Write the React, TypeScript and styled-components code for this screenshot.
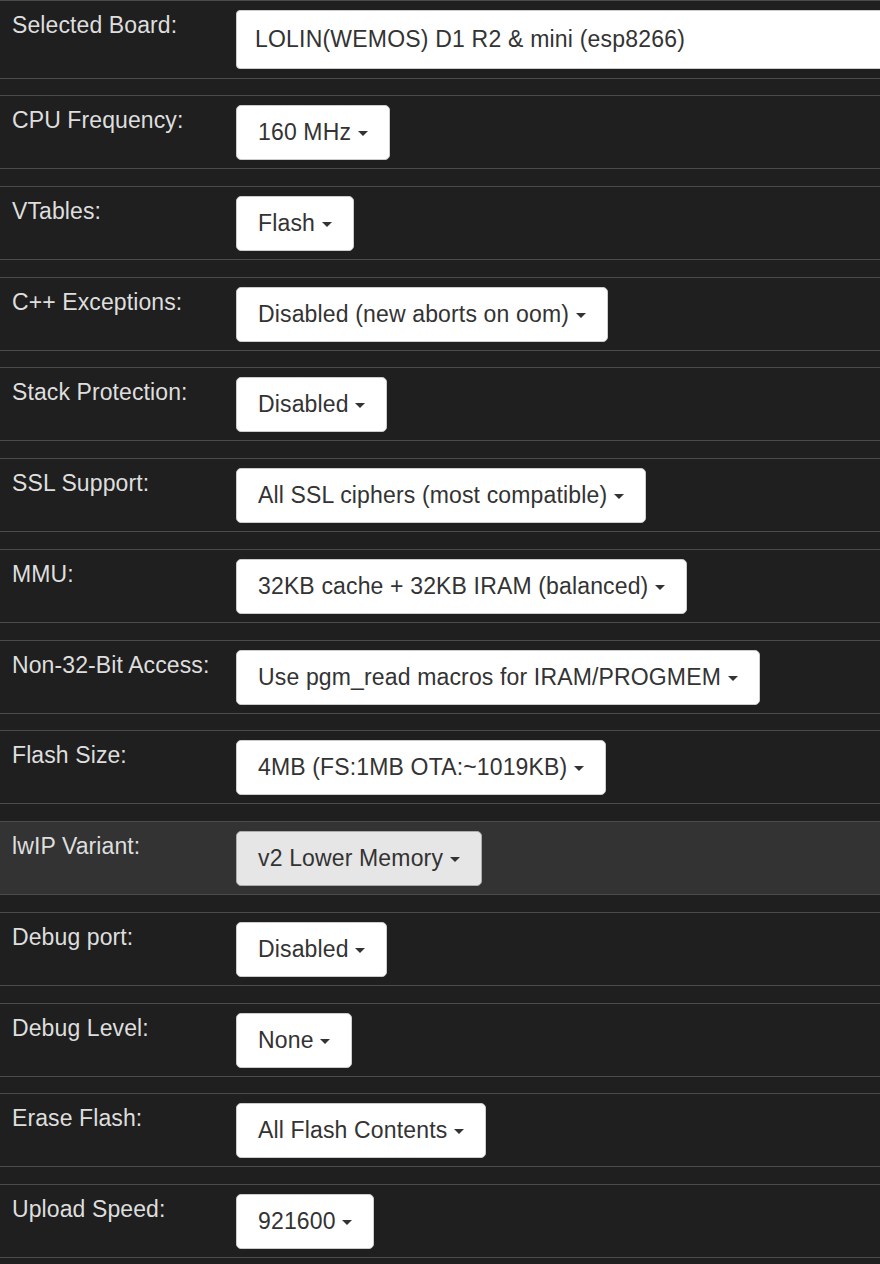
import styled, { createGlobalStyle } from "styled-components";

const GlobalStyle = createGlobalStyle`
  html, body {
    margin: 0;
    padding: 0;
    background: #1f1f1f;
    overflow-x: hidden;
  }
  body {
    font-family: "Liberation Sans", Arial, sans-serif;
  }
`;

// =============================OPTIONS=============================
const options: { label: string; value: string; active?: boolean }[] = [
  { label: "CPU Frequency:", value: "160 MHz" },
  { label: "VTables:", value: "Flash" },
  { label: "C++ Exceptions:", value: "Disabled (new aborts on oom)" },
  { label: "Stack Protection:", value: "Disabled" },
  { label: "SSL Support:", value: "All SSL ciphers (most compatible)" },
  { label: "MMU:", value: "32KB cache + 32KB IRAM (balanced)" },
  { label: "Non-32-Bit Access:", value: "Use pgm_read macros for IRAM/PROGMEM" },
  { label: "Flash Size:", value: "4MB (FS:1MB OTA:~1019KB)" },
  { label: "lwIP Variant:", value: "v2 Lower Memory", active: true },
  { label: "Debug port:", value: "Disabled" },
  { label: "Debug Level:", value: "None" },
  { label: "Erase Flash:", value: "All Flash Contents" },
  { label: "Upload Speed:", value: "921600" },
];

const Page = styled.div`
  width: 880px;
  overflow: hidden;
`;

const Row = styled.div<{ $active?: boolean; $first?: boolean }>`
  display: grid;
  grid-template-columns: 224px 1fr;
  align-items: start;
  background: ${({ $active }) => ($active ? "#333333" : "#1f1f1f")};
  border-top: 1px solid #4b4b4b;
  border-bottom: 1px solid #4b4b4b;
  padding: 9px 0 ${({ $first }) => ($first ? "9px" : "8px")} 12px;
  margin-bottom: ${({ $first }) => ($first ? "16px" : "16.75px")};
  min-width: 0;
`;

const Label = styled.div`
  color: #dedede;
  font-size: 23px;
  letter-spacing: 0.1px;
  line-height: 25px;
  padding-top: 3px;
  white-space: nowrap;
`;

const BoardBox = styled.div`
  box-sizing: border-box;
  width: 700px;
  height: 59px;
  padding: 0 18px;
  display: flex;
  align-items: center;
  background: #ffffff;
  border: 1px solid #cccccc;
  border-radius: 4px 0 0 4px;
  color: #333333;
  font-size: 23px;
  letter-spacing: 0.2px;
  white-space: nowrap;
`;

const Select = styled.div<{ $active?: boolean }>`
  box-sizing: border-box;
  justify-self: start;
  display: inline-flex;
  align-items: center;
  height: 55px;
  padding: 0 21px;
  background: ${({ $active }) => ($active ? "#e6e6e6" : "#ffffff")};
  border: 1px solid ${({ $active }) => ($active ? "#adadad" : "#cccccc")};
  border-radius: 5px;
  color: #333333;
  font-size: 23px;
  letter-spacing: 0.15px;
  line-height: 25px;
  white-space: pre;
`;

const Caret = styled.span`
  display: inline-block;
  width: 0;
  height: 0;
  margin-top: 2px;
  border-top: 5px solid #333333;
  border-left: 5px solid transparent;
  border-right: 5px solid transparent;
`;

export default function App() {
  return (
    <>
      <GlobalStyle />
      <Page>
        <Row $first>
          <Label>Selected Board:</Label>
          <BoardBox>LOLIN(WEMOS) D1 R2 &amp; mini (esp8266)</BoardBox>
        </Row>
        {options.map((opt, index) => (
          <Row key={index} $active={opt.active}>
            <Label>{opt.label}</Label>
            <Select $active={opt.active}>
              {opt.value + " "}
              <Caret />
            </Select>
          </Row>
        ))}
      </Page>
    </>
  );
}
